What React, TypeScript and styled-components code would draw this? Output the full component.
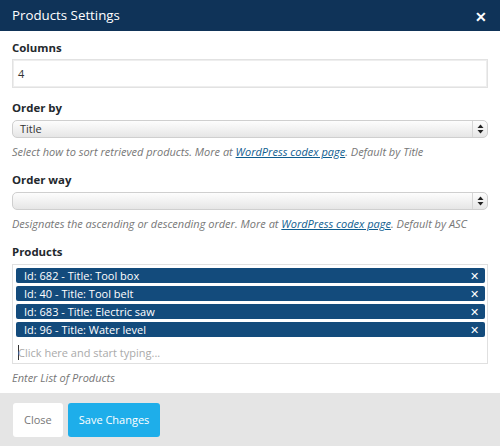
import React from "react";
import styled, { createGlobalStyle } from "styled-components";

const Global = createGlobalStyle`
  html, body { margin: 0; padding: 0; background: #fff; }
  body { font-family: "Open Sans", "Liberation Sans", sans-serif; }
  * { box-sizing: border-box; }
`;

const Modal = styled.div`
  width: 500px;
  height: 446px;
  display: flex;
  flex-direction: column;
  background: #fff;
  overflow: hidden;
`;

const Header = styled.div`
  height: 31px;
  flex-shrink: 0;
  background: #0f3358;
  display: flex;
  align-items: center;
  justify-content: space-between;
  padding: 0 12px;
  color: #fff;
`;

const Title = styled.div`
  font-size: 13.3px;
  line-height: 20px;
  margin-top: -1px;
`;

const CloseX = styled.div`
  font-size: 14px;
  font-weight: 700;
  line-height: 18px;
  margin-top: 3px;
  margin-right: 1px;
`;

const Body = styled.div`
  flex: 1;
  padding: 8px 12px 0;
  display: flex;
  flex-direction: column;
`;

const Label = styled.div<{ $mt?: number }>`
  font-size: 11.4px;
  font-weight: 700;
  line-height: 18px;
  color: #23282d;
  margin-top: ${(p) => p.$mt ?? 0}px;
`;

const TextInput = styled.div`
  margin-top: 2px;
  height: 29px;
  border: 1px solid #e2e2e2;
  box-shadow: inset 0 0 0 1px #eee;
  padding: 0 5px;
  font-size: 11px;
  line-height: 27px;
  color: #333;
`;

const Select = styled.div`
  margin-top: 3px;
  height: 18px;
  border: 1px solid #cfcfcf;
  border-radius: 5px;
  background: linear-gradient(#fdfdfd, #e6e6e6);
  display: flex;
  align-items: stretch;
  font-size: 11px;
  line-height: 16px;
  color: #333;
`;

const SelectValue = styled.div`
  flex: 1;
  padding-left: 7px;
`;

const SelectArrows = styled.div`
  width: 15px;
  border-left: 1px solid #d6d6d6;
  display: flex;
  align-items: center;
  justify-content: center;
`;

const Help = styled.div`
  margin-top: 5px;
  font-size: 11px;
  font-style: italic;
  line-height: 18px;
  color: #777;
  white-space: nowrap;
`;

const Link = styled.a`
  color: #0f5d8f;
  text-decoration: underline;
`;

const TagBox = styled.div`
  margin-top: 3px;
  height: 100px;
  border: 1px solid #e0e0e0;
  padding: 3px 2px 0 3px;
  display: flex;
  flex-direction: column;
  gap: 3px;
`;

const Tag = styled.div`
  height: 15px;
  background: #134b7c;
  border-radius: 2px;
  color: #fff;
  font-size: 11px;
  font-weight: 500;
  line-height: 15px;
  padding: 0 6px 0 8px;
  display: flex;
  justify-content: space-between;
  align-items: center;
`;

const TagX = styled.span`
  font-size: 11px;
  font-weight: 400;
`;

const Placeholder = styled.div`
  margin-top: 2px;
  height: 22px;
  display: flex;
  align-items: center;
  padding-left: 2px;
  font-size: 11px;
  color: #aaa;
`;

const Caret = styled.span`
  width: 1px;
  height: 15px;
  background: #333;
  margin-right: -1px;
`;

const Footer = styled.div`
  height: 53px;
  flex-shrink: 0;
  background: #e5e5e5;
  padding: 10px 13px;
  display: flex;
  gap: 5px;
  align-items: flex-start;
`;

const Button = styled.div<{ $primary?: boolean }>`
  height: 34px;
  padding: 0 ${(p) => (p.$primary ? 11 : 11)}px;
  border-radius: 3px;
  background: ${(p) => (p.$primary ? "#1eaeea" : "#fff")};
  color: ${(p) => (p.$primary ? "#fff" : "#777")};
  font-size: 11px;
  line-height: 34px;
`;

const Arrows = () => (
  <svg width="7" height="10" viewBox="0 0 7 10">
    <path d="M3.5 0.5 L6.5 4 L0.5 4 Z" fill="#222" />
    <path d="M3.5 9.5 L6.5 6 L0.5 6 Z" fill="#222" />
  </svg>
);

const products = [
  "Id: 682 - Title: Tool box",
  "Id: 40 - Title: Tool belt",
  "Id: 683 - Title: Electric saw",
  "Id: 96 - Title: Water level",
];

export default function App() {
  return (
    <>
      <Global />
      <Modal>
        <Header>
          <Title>Products Settings</Title>
          <CloseX>✕</CloseX>
        </Header>
        <Body>
          <Label>Columns</Label>
          <TextInput>4</TextInput>

          <Label $mt={11}>Order by</Label>
          <Select>
            <SelectValue>Title</SelectValue>
            <SelectArrows>
              <Arrows />
            </SelectArrows>
          </Select>
          <Help>
            Select how to sort retrieved products. More at{" "}
            <Link>WordPress codex page</Link>. Default by Title
          </Help>

          <Label $mt={10}>Order way</Label>
          <Select>
            <SelectValue />
            <SelectArrows>
              <Arrows />
            </SelectArrows>
          </Select>
          <Help>
            Designates the ascending or descending order. More at{" "}
            <Link>WordPress codex page</Link>. Default by ASC
          </Help>

          <Label $mt={10}>Products</Label>
          <TagBox>
            {products.map((p) => (
              <Tag key={p}>
                <span>{p}</span>
                <TagX>✕</TagX>
              </Tag>
            ))}
            <Placeholder>
              <Caret />
              Click here and start typing...
            </Placeholder>
          </TagBox>
          <Help>Enter List of Products</Help>
        </Body>
        <Footer>
          <Button>Close</Button>
          <Button $primary>Save Changes</Button>
        </Footer>
      </Modal>
    </>
  );
}
